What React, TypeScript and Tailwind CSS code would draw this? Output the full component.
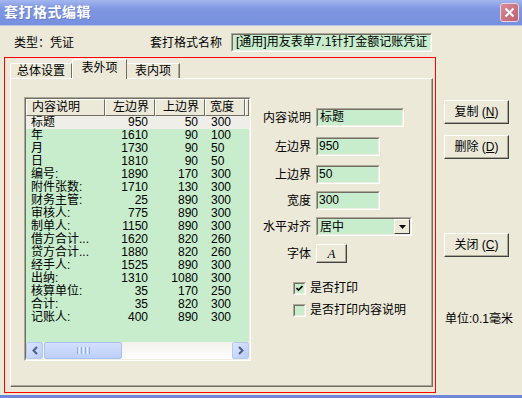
import React from "react";

const rows: string[][] = [
    ["标题", "950", "50", "300"],
    ["年", "1610", "90", "100"],
    ["月", "1730", "90", "50"],
    ["日", "1810", "90", "50"],
    ["编号:", "1890", "170", "300"],
    ["附件张数:", "1710", "130", "300"],
    ["财务主管:", "25", "890", "300"],
    ["审核人:", "775", "890", "300"],
    ["制单人:", "1150", "890", "300"],
    ["借方合计...", "1620", "820", "260"],
    ["贷方合计...", "1880", "820", "260"],
    ["经手人:", "1525", "890", "300"],
    ["出纳:", "1310", "1080", "300"],
    ["核算单位:", "35", "170", "250"],
    ["合计:", "35", "820", "300"],
    ["记账人:", "400", "890", "300"],
];

function Sunken({ w, children }: { w: string; children?: React.ReactNode }) {
    // classic sunken edit box
    return (
        <div
            className={`${w} h-[19px] border border-t-[#aca899] border-l-[#aca899] border-r-white border-b-white`}
        >
            <div className="h-full border border-t-[#716f64] border-l-[#716f64] border-r-[#f1efe2] border-b-[#f1efe2] bg-[#c7edcc] flex items-center pl-[1px] leading-[15px]">
                {children}
            </div>
        </div>
    );
}

function Button({ children }: { children: React.ReactNode }) {
    return (
        <div className="w-[65px] h-[24px] border border-t-white border-l-white border-r-[#404040] border-b-[#404040] shadow-[inset_-1px_-1px_0_#aca899] flex items-center justify-center">
            {children}
        </div>
    );
}

function ScrollArrow({ left }: { left?: boolean }) {
    return (
        <div className="w-[17px] h-[17px] rounded-[2px] border border-[#b4c8f6] bg-[linear-gradient(135deg,#dbe6fe,#b9cbfa)] flex items-center justify-center">
            <svg width="8" height="9" viewBox="0 0 8 9">
                <path
                    d={left ? "M6 1 L2.5 4.5 L6 8" : "M2 1 L5.5 4.5 L2 8"}
                    fill="none"
                    stroke="#4d6185"
                    strokeWidth="2"
                />
            </svg>
        </div>
    );
}

function ListView() {
    return (
        <div className="w-[227px] h-[264px] border border-t-[#aca899] border-l-[#aca899] border-r-white border-b-white">
            <div className="h-full flex flex-col border border-t-[#716f64] border-l-[#716f64] border-r-[#f1efe2] border-b-[#f1efe2] bg-[#c7edcc]">
                {/* header */}
                <div className="flex h-[17px] bg-[#ece9d8] leading-[15px]">
                    <div className="w-[79px] border border-t-white border-l-white border-r-[#716f64] border-b-[#716f64] pl-[5px]">
                        内容说明
                    </div>
                    <div className="w-[50px] border border-t-white border-l-white border-r-[#716f64] border-b-[#716f64] text-right pr-[5px]">
                        左边界
                    </div>
                    <div className="w-[50px] border border-t-white border-l-white border-r-[#716f64] border-b-[#716f64] text-right pr-[5px]">
                        上边界
                    </div>
                    <div className="w-[40px] border border-t-white border-l-white border-r-[#716f64] border-b-[#716f64] pl-[4px]">
                        宽度
                    </div>
                    <div className="flex-1 border border-t-white border-l-white border-r-[#716f64] border-b-[#716f64]" />
                </div>
                <div className="flex-1 overflow-hidden">
                    {rows.map((r, i) => (
                        <div
                            key={i}
                            className={`flex h-[13px] leading-[13px] ${i === 0 ? "bg-[#efeee8]" : ""}`}
                        >
                            <div className="w-[79px] pl-[5px] whitespace-nowrap">{r[0]}</div>
                            <div className="w-[50px] text-right pr-[7px]">{r[1]}</div>
                            <div className="w-[50px] text-right pr-[7px]">{r[2]}</div>
                            <div className="w-[40px] pl-[6px]">{r[3]}</div>
                        </div>
                    ))}
                </div>
                {/* horizontal scrollbar */}
                <div className="h-[17px] flex bg-[linear-gradient(to_bottom,#f3f1ec,#fefefe)]">
                    <ScrollArrow left />
                    <div className="ml-[1px] w-[78px] h-[17px] rounded-[2px] border border-[#a8bff5] bg-[linear-gradient(to_bottom,#d3e0fd,#bccffb)] flex items-center justify-center gap-[1px]">
                        <div className="w-[1px] h-[7px] bg-[#8cb0f8]" />
                        <div className="w-[1px] h-[7px] bg-[#eef3fe]" />
                        <div className="w-[1px] h-[7px] bg-[#8cb0f8]" />
                        <div className="w-[1px] h-[7px] bg-[#eef3fe]" />
                        <div className="w-[1px] h-[7px] bg-[#8cb0f8]" />
                        <div className="w-[1px] h-[7px] bg-[#eef3fe]" />
                        <div className="w-[1px] h-[7px] bg-[#8cb0f8]" />
                    </div>
                    <div className="flex-1" />
                    <ScrollArrow />
                </div>
            </div>
        </div>
    );
}

function Check({ checked }: { checked?: boolean }) {
    return (
        <div className="w-[13px] h-[13px] border border-t-[#aca899] border-l-[#aca899] border-r-white border-b-white">
            <div className="w-full h-full border border-t-[#716f64] border-l-[#716f64] border-r-[#f1efe2] border-b-[#f1efe2] bg-[#c7edcc] flex items-center justify-center">
                {checked && (
                    <svg width="7" height="7" viewBox="0 0 7 7">
                        <path d="M0.5 3 L2.5 5 L6.5 1" fill="none" stroke="#000" strokeWidth="1.6" />
                    </svg>
                )}
            </div>
        </div>
    );
}

function FormRow({ label, mt, children }: { label: string; mt: string; children: React.ReactNode }) {
    return (
        <div className={`flex items-center ${mt}`}>
            <div className="w-[48px] text-right whitespace-nowrap">{label}</div>
            <div className="ml-[5px]">{children}</div>
        </div>
    );
}

export default function App() {
    return (
        <div className="w-[522px] h-[398px] flex flex-col bg-[#ece9d8] overflow-hidden text-[12px] text-black font-['Liberation_Sans','Noto_Sans_CJK_SC',sans-serif]">
            {/* title bar */}
            <div className="h-[26px] shrink-0 flex items-center justify-between bg-[linear-gradient(to_bottom,#a3b6ef,#8098e2_35%,#768fdf)] border-b border-[#b9c6ee]">
                <span className="ml-[4px] text-[14px] font-bold text-white tracking-[0.5px] [text-shadow:1px_1px_0_#6a7fc8]">
                    套打格式编辑
                </span>
                <div className="mr-[3px] w-[19px] h-[19px] rounded-[3px] border border-[#e8d6dc] bg-[linear-gradient(135deg,#d88b97,#c05f6e)] flex items-center justify-center">
                    <svg width="11" height="11" viewBox="0 0 11 11">
                        <path d="M1.5 1.5 L9.5 9.5 M9.5 1.5 L1.5 9.5" stroke="#fff" strokeWidth="2" />
                    </svg>
                </div>
            </div>

            <div className="flex-1 flex flex-col">
                {/* header row */}
                <div className="mt-[7px] h-[19px] flex items-center">
                    <span className="ml-[14px] w-[136px]">类型：凭证</span>
                    <span>套打格式名称</span>
                    <div className="ml-[9px]">
                        <Sunken w="w-[201px]">
                            <span className="pl-[2px] whitespace-nowrap">[通用]用友表单7.1针打金额记账凭证</span>
                        </Sunken>
                    </div>
                </div>

                <div className="mt-[5px] flex">
                    {/* red outline around the tab control */}
                    <div className="ml-[4px] w-[432px] h-[336px] border border-[#ff0000] pl-[5px] pt-[1px]">
                        <div className="h-[19px] flex items-end">
                            <div className="w-[62px] h-[15px] border-t border-l border-white border-r border-r-[#716f64] rounded-tl-[2px] flex items-center justify-center leading-[13px]">
                                总体设置
                            </div>
                            <div className="relative z-10 -mb-[1px] w-[55px] h-[20px] bg-[#ece9d8] border-t border-l border-white border-r border-r-[#716f64] rounded-tl-[2px] flex items-start justify-center pt-[1px] leading-[15px]">
                                表外项
                            </div>
                            <div className="w-[53px] h-[15px] border-t border-r border-t-white border-r-[#716f64] shadow-[inset_-1px_0_0_#aca899] flex items-center justify-center leading-[13px]">
                                表内项
                            </div>
                        </div>
                        <div className="w-[423px] h-[309px] border border-t-white border-l-white border-r-[#716f64] border-b-[#716f64] shadow-[inset_-1px_-1px_0_#aca899] flex pl-[13px] pt-[18px]">
                            <ListView />
                            <div className="ml-[12px] flex flex-col">
                                <FormRow label="内容说明" mt="mt-[11px]">
                                    <Sunken w="w-[88px]">
                                        <span className="pl-[1px]">标题</span>
                                    </Sunken>
                                </FormRow>
                                <FormRow label="左边界" mt="mt-[10px]">
                                    <Sunken w="w-[64px]">950</Sunken>
                                </FormRow>
                                <FormRow label="上边界" mt="mt-[9px]">
                                    <Sunken w="w-[64px]">50</Sunken>
                                </FormRow>
                                <FormRow label="宽度" mt="mt-[7px]">
                                    <Sunken w="w-[64px]">300</Sunken>
                                </FormRow>
                                <FormRow label="水平对齐" mt="mt-[7px]">
                                    <div className="w-[96px] h-[19px] border border-t-[#aca899] border-l-[#aca899] border-r-white border-b-white">
                                        <div className="h-full border border-t-[#716f64] border-l-[#716f64] border-r-[#f1efe2] border-b-[#f1efe2] bg-[#c7edcc] flex items-center">
                                            <span className="pl-[2px] flex-1">居中</span>
                                            <div className="w-[16px] h-full bg-[#ece9d8] border border-t-white border-l-white border-r-[#404040] border-b-[#404040] flex items-center justify-center">
                                                <svg width="7" height="4" viewBox="0 0 7 4">
                                                    <path d="M0 0 H7 L3.5 4 Z" fill="#000" />
                                                </svg>
                                            </div>
                                        </div>
                                    </div>
                                </FormRow>
                                <FormRow label="字体" mt="mt-[8px]">
                                    <div className="w-[31px] h-[19px] border border-t-white border-l-white border-r-[#404040] border-b-[#404040] shadow-[inset_-1px_-1px_0_#aca899] flex items-center justify-center font-['Liberation_Serif',serif] italic text-[13px]">
                                        A
                                    </div>
                                </FormRow>
                                <div className="mt-[19px] ml-[30px] flex items-center">
                                    <Check checked />
                                    <span className="ml-[4px] leading-[13px]">是否打印</span>
                                </div>
                                <div className="mt-[9px] ml-[30px] flex items-center">
                                    <Check />
                                    <span className="ml-[4px] leading-[13px]">是否打印内容说明</span>
                                </div>
                            </div>
                        </div>
                    </div>

                    {/* right-hand buttons */}
                    <div className="ml-[8px] flex flex-col">
                        <div className="mt-[43px]">
                            <Button>
                                复制 (<span className="underline">N</span>)
                            </Button>
                        </div>
                        <div className="mt-[11px]">
                            <Button>
                                删除 (<span className="underline">D</span>)
                            </Button>
                        </div>
                        <div className="mt-[74px]">
                            <Button>
                                关闭 (<span className="underline">C</span>)
                            </Button>
                        </div>
                        <div className="mt-[53px] ml-[1px] whitespace-nowrap">单位:0.1毫米</div>
                    </div>
                </div>
            </div>
            <div className="h-[3px] shrink-0 bg-[#7086da]" />
        </div>
    );
}
